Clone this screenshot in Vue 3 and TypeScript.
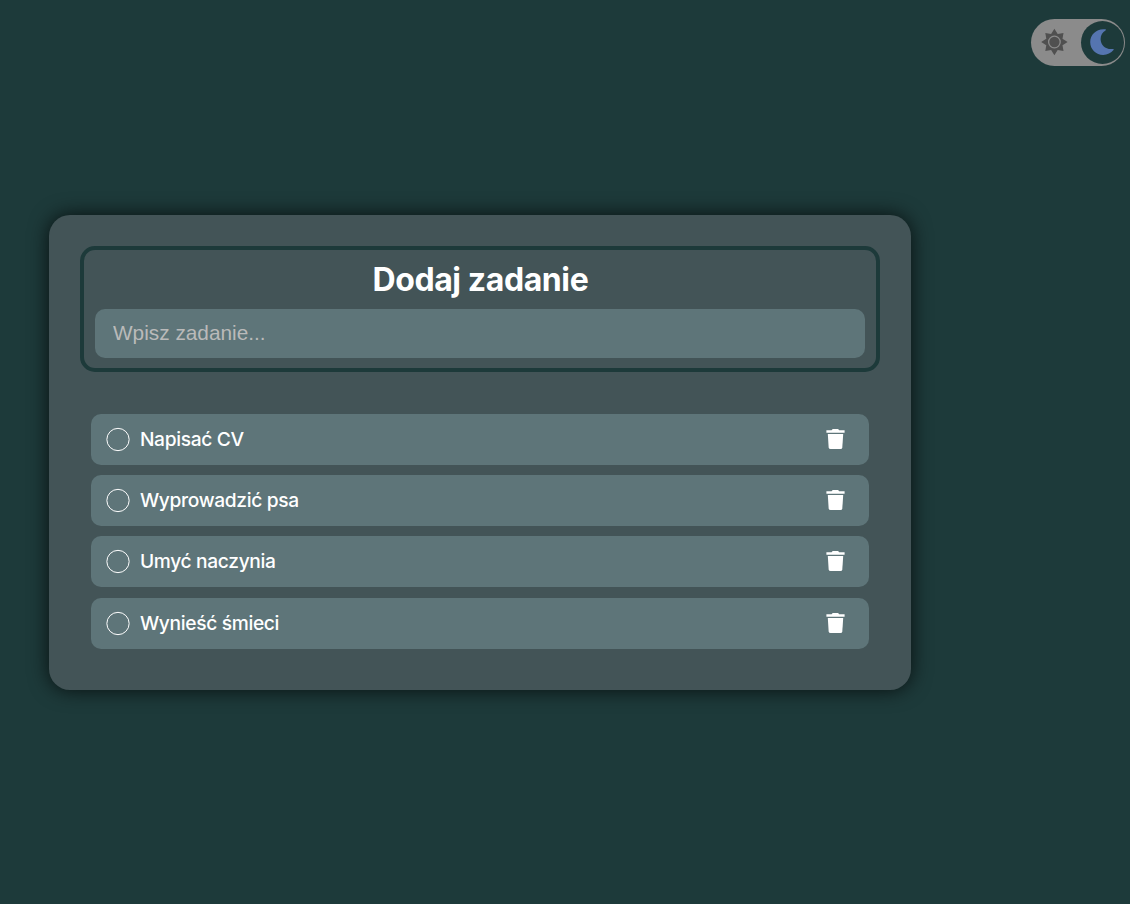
<script setup lang="ts">
import { ref } from 'vue'

interface Task {
  id: number
  name: string
}

const draft = ref('')
const dark = ref(true)
const tasks = ref<Task[]>([
  { id: 1, name: 'Napisać CV' },
  { id: 2, name: 'Wyprowadzić psa' },
  { id: 3, name: 'Umyć naczynia' },
  { id: 4, name: 'Wynieść śmieci' },
])

function addTask(): void {
  const name = draft.value.trim()
  if (!name) return
  tasks.value.push({ id: Date.now(), name })
  draft.value = ''
}

function removeTask(id: number): void {
  tasks.value = tasks.value.filter((task) => task.id !== id)
}
</script>

<template>
  <div class="page">
    <header class="topbar">
      <button class="toggle" type="button" aria-label="Motyw" @click="dark = !dark">
        <span class="side">
          <svg class="sun" viewBox="0 0 28 28">
            <path d="M14.4 .8 L17.7 5.9 L23.5 4.9 L22.5 10.7 L27.6 14 L22.5 17.3 L23.5 23.1 L17.7 22.1 L14.4 27.2 L11.1 22.1 L5.3 23.1 L6.3 17.3 L1.2 14 L6.3 10.7 L5.3 4.9 L11.1 5.9 Z" />
            <circle class="ring" cx="14.4" cy="14" r="5.8" />
          </svg>
        </span>
        <span class="knob">
          <svg class="moon" viewBox="0 0 26 28">
            <path d="M16.4 1.3 C8.3 0.1 1.2 6 1.2 14 C1.2 21.4 7 27 14.2 27 C18.3 27 22.1 25.2 24.5 22.1 C25 21.4 24.6 20.8 23.8 20.9 C16.8 21.8 11.6 17.1 11.6 10.9 C11.6 7.3 13.5 4.2 16.5 2.5 C17.2 2 17.1 1.4 16.4 1.3 Z" />
          </svg>
        </span>
      </button>
    </header>
    <main class="card">
      <form class="add" @submit.prevent="addTask">
        <h1>Dodaj zadanie</h1>
        <input v-model="draft" type="text" placeholder="Wpisz zadanie..." />
      </form>
      <ul class="list">
        <li v-for="task in tasks" :key="task.id" class="item">
          <svg class="check" viewBox="0 0 24 23">
            <circle cx="12" cy="11.5" r="11.15" />
          </svg>
          <span class="name">{{ task.name }}</span>
          <button class="remove" type="button" aria-label="Usuń" @click="removeTask(task.id)">
            <svg viewBox="0 0 19 20">
              <path d="M.4 1.3 H5.6 L6.7 0 H12.1 L13.2 1.3 H18.6 V3.8 H.4 Z" />
              <path d="M1.8 5 H17.2 L16.3 18.4 Q16.1 20 14.5 20 H4.5 Q2.9 20 2.7 18.4 Z" />
            </svg>
          </button>
        </li>
      </ul>
    </main>
  </div>
</template>

<style>
body {
  background: #1d3a3a;
}
</style>

<style scoped>
.page {
  box-sizing: border-box;
  height: 904px;
  padding: 19px 5px 0 49.4px;
  overflow: hidden;
  background: #1d3a3a;
  color: #fff;
  font-family: Inter, 'Liberation Sans', sans-serif;
}
.topbar {
  display: flex;
  justify-content: flex-end;
  height: 196px;
}
.toggle {
  display: flex;
  align-items: center;
  justify-content: space-between;
  box-sizing: border-box;
  width: 94px;
  height: 47px;
  padding: 2px 1.5px 2px 9px;
  border: 0;
  border-radius: 24px;
  background: #8b8b8b;
}
.side {
  display: flex;
  padding-bottom: 1px;
}
.sun {
  width: 28px;
  height: 28px;
  fill: #505050;
}
.ring {
  stroke: #8b8b8b;
  stroke-width: 1.3;
}
.knob {
  display: flex;
  align-items: center;
  justify-content: center;
  box-sizing: border-box;
  width: 43px;
  height: 43px;
  padding: 0 0 1px;
  border-radius: 50%;
  background: #1d3a3a;
}
.moon {
  width: 26px;
  height: 28px;
  fill: #5575b0;
}
.card {
  box-sizing: border-box;
  width: 862px;
  height: 475px;
  padding: 31px;
  border-radius: 21px;
  background: #435457;
  box-shadow: 0 0 20px rgba(0, 0, 0, 0.75);
}
.add {
  box-sizing: border-box;
  height: 126px;
  padding: 10px 11px;
  border: 4px solid #1d3a3a;
  border-radius: 15px;
}
h1 {
  margin: 0 0 10px;
  font-size: 32px;
  line-height: 39px;
  font-weight: 700;
  letter-spacing: -0.4px;
  text-align: center;
}
input {
  display: block;
  box-sizing: border-box;
  width: 100%;
  height: 49px;
  padding: 0 17px 2px 17.6px;
  border: 0;
  border-radius: 10px;
  outline: 0;
  background: #5e7579;
  color: #fff;
  font: 20.8px 'Liberation Sans', Arial, sans-serif;
}
input::placeholder {
  color: #bababa;
}
.list {
  display: flex;
  flex-direction: column;
  gap: 10.2px;
  margin: 42px 11px 0;
  padding: 0;
  list-style: none;
}
.item {
  display: flex;
  align-items: center;
  box-sizing: border-box;
  height: 51px;
  padding: 0 24.4px 0 15px;
  border-radius: 10px;
  background: #5e7579;
}
.check {
  width: 24px;
  height: 23px;
  fill: none;
  stroke: #fff;
  stroke-width: 1;
  overflow: visible;
}
.name {
  flex: 1;
  margin-left: 9.5px;
  padding-bottom: 1px;
  font-size: 19.2px;
  line-height: 24px;
  font-weight: 500;
  letter-spacing: -0.33px;
}
.remove {
  display: flex;
  padding: 0 0 1px;
  border: 0;
  background: none;
}
.remove svg {
  width: 19px;
  height: 20px;
  fill: #fff;
}
</style>
